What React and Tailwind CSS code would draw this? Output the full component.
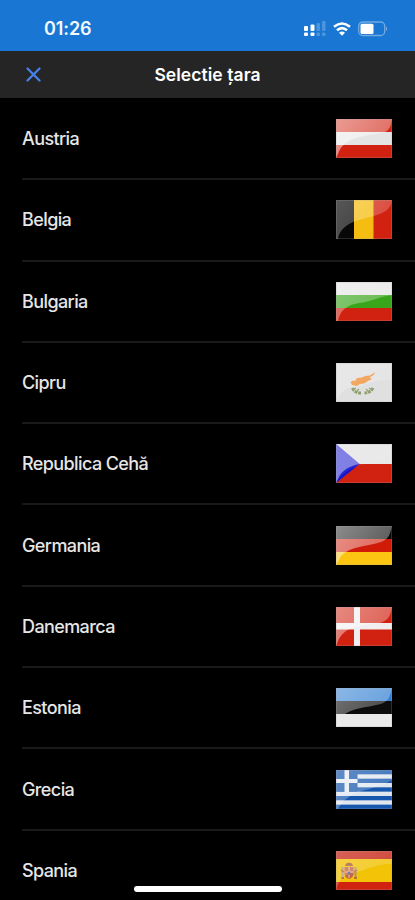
import React from 'react';

const red = '#d12110';

const sweep = 'M0 0H56C56 27 27 13 9 29C5 32 2 35 0 39Z';
const sweepMid = 'M0 0H56V10C38 22 14 17 2 39H0Z';

function Flag({ children, gloss = sweep, strength = 0.4, id }) {
  return (
    <svg viewBox="0 0 56 39" preserveAspectRatio="none" className="h-[39px] w-14 shrink-0">
      <defs>
        <linearGradient id={id} x1="0" y1="0" x2="1" y2="0.5">
          <stop offset="0" stopColor="#fff" stopOpacity={strength * 1.15} />
          <stop offset="1" stopColor="#fff" stopOpacity={strength * 0.7} />
        </linearGradient>
      </defs>
      {children}
      <path d={gloss} fill={`url(#${id})`} />
      <rect x=".5" y=".5" width="55" height="38" fill="none" stroke="#aaa" strokeOpacity=".22" />
    </svg>
  );
}

function Bands({ colors, stops = [0, 13, 26, 39] }) {
  return colors.map((c, i) => (
    <rect key={i} y={stops[i]} width="56" height={stops[i + 1] - stops[i]} fill={c} />
  ));
}

const austria = (
  <Flag id="at" strength={0.48} gloss="M0 0H56C55 8 53 11 49 13C35 17 8 16 2 35L0 39Z">
    <Bands colors={[red, '#e4e4e4', red]} />
  </Flag>
);

const belgium = (
  <Flag id="be" strength={0.28} gloss="M0 0H56C55 10 47 13 38 16C22 20 5 23 2 39H0Z">
    <rect width="19" height="39" fill="#080808" />
    <rect x="18" width="20" height="39" fill="#f5bd12" />
    <rect x="37.500" width="18.500" height="39" fill={red} />
  </Flag>
);

const bulgaria = (
  <Flag id="bg" strength={0.34} gloss="M0 0H56V13C40 15 36 20 23 21C11 23 4 28 2 39H0Z">
    <Bands colors={['#e5e5e5', '#38a51b', red]} />
  </Flag>
);

const cyprus = (
  <Flag id="cy" strength={0.22} gloss="M0 0H56V17C37 16 28 24 17 24C9 25 4 30 0 38Z">
    <rect width="56" height="39" fill="#e0e0e0" />
    <path d="M14.500 19L17 17.500L19 18L21 15L26 14.500L29 13L34 12.500L39.500 9L37 12.500L33.500 14.500L36 16L32 18L28 20.500L24 21L21 23L16 22Z" fill="#ef9138" />
    <path d="M16.500 25C18 28.500 21 30 25 30M37 25C35 28.500 32 30 28.500 30" fill="none" stroke="#8f9f6c" strokeWidth="3" strokeDasharray="3 .8" />
    <path d="M17 27L20 25M20 29L23 26M36 27L33 25M33 29L30 26" stroke="#98a578" strokeWidth="1.3" />
  </Flag>
);

const czechia = (
  <Flag id="cz" strength={0.07}>
    <rect width="56" height="20" fill="#e8e8e8" />
    <rect y="20" width="56" height="19" fill={red} />
    <path d="M0 0L23.500 20L0 39Z" fill="#1514ce" />
    <path d="M0 0L23.500 20C15 22 6 25 2 35L0 39Z" fill="#fff" opacity=".42" />
  </Flag>
);

const germany = (
  <Flag id="de" strength={0.46} gloss="M0 0H56C54 8 53 13 45 16C28 21 15 20 5 30L0 39Z">
    <Bands colors={['#0b0b0b', '#d01b08', '#fbc512']} />
  </Flag>
);

const denmark = (
  <Flag id="dk" strength={0.41} gloss="M0 0H56C55 8 52 14 44 16C28 19 7 17 1 37L0 39Z">
    <rect width="56" height="39" fill={red} />
    <path d="M18 0H24V16H56V22.500H24V39H18V22.500H0V16H18Z" fill="#f0eeee" />
  </Flag>
);

const estonia = (
  <Flag id="ee" strength={0.38} gloss="M0 0H56C54 8 53 13 45 16C28 20 18 20 9 26H0Z">
    <Bands colors={['#3380d2', '#0c0c0c', '#eaeaea']} />
  </Flag>
);

const greece = (
  <Flag id="gr" strength={0.28} gloss={sweepMid}>
    <rect width="56" height="39" fill="#1556ae" />
    {[1, 3, 5, 7].map((n) => (
      <rect key={n} y={n * 4.33} width="56" height="4.33" fill="#dfe6ee" />
    ))}
    <rect width="21.500" height="21.700" fill="#1556ae" />
    <path d="M8.500 0H13V9H21.500V13H13V22H8.500V13H0V9H8.500Z" fill="#e6eaf1" />
  </Flag>
);

const spain = (
  <Flag id="es" strength={0.22} gloss="M0 0H56V13C37 13 26 21 16 22C8 24 3 29 0 39Z">
    <Bands colors={['#c92a1c', '#f2c306', red]} stops={[0, 8, 31, 39]} />
    <path d="M9 15L10 12.500L13 11.500L16 12.500L17 15Z" fill="#ad5a35" />
    <path d="M8.500 16H17.500V23Q17 27 13 28Q9 27 8.500 23Z" fill="#c5644b" />
    <path d="M13 16V27M9 21H17" stroke="#dba682" strokeWidth="1.500" />
    <path d="M6.500 16V27M19.500 16V27" stroke="#a9947c" strokeWidth="2" />
    <path d="M5 19L8 21M18 21L21 19M5 27H8M18 27H21" stroke="#b25d31" strokeWidth="1.500" />
    <circle cx="13" cy="22" r="1.500" fill="#625782" />
  </Flag>
);

const countries = [
  ['Austria', austria],
  ['Belgia', belgium],
  ['Bulgaria', bulgaria],
  ['Cipru', cyprus],
  ['Republica Cehă', czechia],
  ['Germania', germany],
  ['Danemarca', denmark],
  ['Estonia', estonia],
  ['Grecia', greece],
  ['Spania', spain],
];

function StatusBar() {
  return (
    <div className="flex h-[51px] shrink-0 items-start justify-between bg-[#1976d2] pl-[44px] pr-[27px] pt-[18px]">
      <span className="text-[18px] font-semibold leading-[21px] tracking-[-0.1px] text-[#f3f8ff]">01:26</span>
      <div className="flex h-[21px] items-center">
        <svg viewBox="0 0 22 16" className="mr-[7px] h-4 w-[22px]">
          <g fill="#fff">
            <rect x="0" y="5" width="4" height="5" rx="1" />
            <rect x="6.500" y="3.500" width="4" height="6.500" rx="1" />
            <rect x="0" y="11.500" width="4" height="3.500" rx="1" />
            <rect x="6.500" y="11.500" width="4" height="3.500" rx="1" />
            <g opacity=".22">
              <rect x="12.500" y="2" width="3.500" height="8" rx="1" />
              <rect x="18" y="0" width="3.500" height="10" rx="1" />
              <rect x="12.500" y="11.500" width="3.500" height="3.500" rx="1" />
              <rect x="18" y="11.500" width="3.500" height="3.500" rx="1" />
            </g>
          </g>
        </svg>
        <svg viewBox="0 0 18 14" className="mr-[7px] h-3.5 w-[18px]" fill="none" stroke="#fff" strokeWidth="2.600">
          <path d="M1 4.800Q9-1.800 17 4.800" />
          <path d="M4 8.300Q9 4 14 8.300" />
          <path d="M6 10.700Q9 8.400 12 10.700L9 13.800Z" fill="#fff" stroke="none" />
        </svg>
        <svg viewBox="0 0 30 16" className="h-4 w-[30px]">
          <rect x=".7" y="1" width="26" height="13.500" rx="4" fill="none" stroke="#fff" strokeOpacity=".38" strokeWidth="1.300" />
          <rect x="2.500" y="2.700" width="13" height="10.200" rx="1.500" fill="#fff" />
          <path d="M28 5.500Q30 7.700 28 10Z" fill="#fff" opacity=".5" />
        </svg>
      </div>
    </div>
  );
}

export default function App() {
  return (
    <div className="relative flex h-[900px] w-full flex-col overflow-hidden bg-black font-['Inter','Liberation_Sans',sans-serif]">
      <StatusBar />
      <header className="grid h-[47px] shrink-0 grid-cols-[1fr_auto_1fr] items-center bg-[#252525] px-[26px]">
        <button className="w-[15px]" aria-label="Închide">
          <svg viewBox="0 0 15 15" className="size-[15px]" fill="none" stroke="#4682e6" strokeWidth="2.300" strokeLinecap="round">
            <path d="M1.500 1.500L13.500 13.500M13.500 1.500L1.500 13.500" />
          </svg>
        </button>
        <h1 className="text-[17.5px] font-semibold leading-5 tracking-[0.05px] text-white">Selectie țara</h1>
      </header>
      <ul className="shrink-0 pt-px">
        {countries.map(([name, flag]) => (
          <li key={name} className="pl-[22px]">
            <div className="flex h-[81.3px] items-center justify-between border-b-2 border-[#191919] pr-[23px]">
              <span className="pt-px text-[18px] font-medium leading-6 tracking-[-0.6px] text-[#e6e6e6]">{name}</span>
              {flag}
            </div>
          </li>
        ))}
      </ul>
      <div className="absolute bottom-2 left-[134px] h-[6px] w-[148px] rounded-full bg-white" />
    </div>
  );
}
